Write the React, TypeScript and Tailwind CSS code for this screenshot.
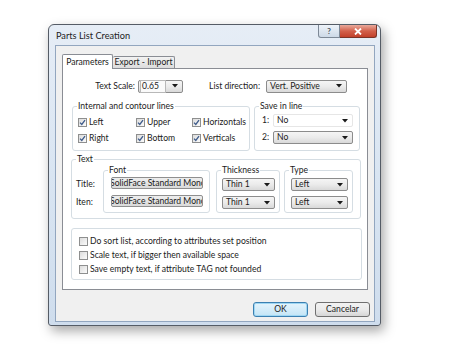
import React from "react";

const Arrow = () => (
  <svg width="6" height="4" viewBox="0 0 6 4" className="shrink-0">
    <path d="M0 0 L6 0 L3 3.5 Z" fill="#1a1a1a" />
  </svg>
);

const Combo = ({
  text,
  w,
  flat = false,
  focus = false,
}: {
  text: string;
  w: string;
  flat?: boolean;
  focus?: boolean;
}) => (
  <div
    className={`${w} h-[13px] flex items-center justify-between pl-[2px] pr-[4px] rounded-[2px] border ${
      flat
        ? "border-[#e6e6e6] bg-white"
        : "border-[#8c8c8c] bg-gradient-to-b from-[#f5f5f5] via-[#ebebeb] to-[#d9d9d9]"
    }`}
  >
    <span
      className={`leading-[11px] px-[1px] ${focus ? "bg-[#fafafa] outline outline-1 outline-[#b8b8b8] pr-[6px]" : ""}`}
    >
      {text}
    </span>
    <Arrow />
  </div>
);

const Check = ({ checked, label }: { checked: boolean; label: string }) => (
  <div className="flex items-center h-[10px]">
    <div className="w-[9px] h-[9px] border border-[#8e8f8f] bg-gradient-to-br from-[#dcdcdc] to-[#fbfbfb] flex items-center justify-center shrink-0">
      {checked && (
        <svg width="7" height="7" viewBox="0 0 7 7">
          <path d="M1 3.6 L2.8 5.5 L6 1.2" stroke="#3d5a8a" strokeWidth="1.3" fill="none" />
        </svg>
      )}
    </div>
    <span className="ml-[2px] leading-[10px] whitespace-nowrap">{label}</span>
  </div>
);

const Group = ({
  label,
  className,
  children,
}: {
  label: string;
  className: string;
  children: React.ReactNode;
}) => (
  <div className={`relative border border-[#d5dde3] rounded-[3px] ${className}`}>
    <span className="absolute -top-[6px] left-[4px] px-[1px] bg-white leading-[11px]">{label}</span>
    {children}
  </div>
);

const Field = ({ text }: { text: string }) => (
  <div className="w-[92px] h-[12px] border border-[#8f8f8f] rounded-[2px] bg-gradient-to-b from-[#eeeeee] to-[#dadada] overflow-hidden flex items-center">
    <span className="ml-[-2px] whitespace-nowrap leading-[10px]">{text}</span>
  </div>
);

export default function App() {
  return (
    <div
      className="w-[449px] h-[351px] bg-white overflow-hidden pt-[24px] pl-[48px] text-[8.6px] text-[#1b1b1b]"
      style={{ fontFamily: 'Lato, "Noto Sans", sans-serif' }}
    >
      <div className="w-[333px] h-[302px] rounded-t-[6px] rounded-b-[3px] border border-[#555c66] bg-gradient-to-b from-[#e6edf6] via-[#d9e5f2] to-[#cfdded] shadow-[3px_5px_12px_rgba(0,0,0,0.35)] flex flex-col">
        {/* title bar */}
        <div className="h-[20px] flex items-start">
          <span className="pl-[7px] pt-[5px] leading-[11px] text-[9.2px] text-[#222]">Parts List Creation</span>
          <div className="ml-auto mr-[3px] flex">
            <div className="w-[22px] h-[13px] border border-[#7d8896] border-t-0 rounded-bl-[3px] bg-gradient-to-b from-[#eef3f9] to-[#cdd9e7] flex items-center justify-center text-[8px] font-bold text-[#4b5360] leading-[10px]">
              ?
            </div>
            <div className="w-[37px] h-[13px] border border-[#7a3327] border-t-0 border-l-0 rounded-br-[3px] bg-gradient-to-b from-[#e8a99c] via-[#d2604b] to-[#c2402a] flex items-center justify-center">
              <svg width="8" height="7" viewBox="0 0 8 7">
                <path d="M1 0.5 L7 6.5 M7 0.5 L1 6.5" stroke="#ffffff" strokeWidth="1.8" />
              </svg>
            </div>
          </div>
        </div>
        {/* client area */}
        <div className="ml-[6px] mr-[5px] mb-[3px] flex-1 border border-[#92a6bf] bg-[#f0f0f0] flex flex-col pl-[6px] pt-[7px]">
          {/* tabs */}
          <div className="flex items-end h-[15px]">
            <div className="h-[15px] w-[51px] justify-center border border-b-0 border-[#8a8d94] rounded-t-[2px] bg-white flex items-center relative z-10 -mb-[1px]">
              Parameters
            </div>
            <div className="h-[12px] w-[62px] justify-center border border-b-0 border-l-0 border-[#8a8d94] rounded-t-[2px] bg-gradient-to-b from-[#f3f3f3] to-[#dcdcdc] flex items-center">
              Export - Import
            </div>
          </div>
          {/* panel */}
          <div className="w-[306px] h-[222px] border border-[#8a8d94] bg-white pl-[8px] pr-[6px] pt-[9px] flex flex-col">
            {/* row 1 */}
            <div className="flex items-center h-[16px]">
              <span className="w-[64px] text-right">Text Scale:</span>
              <div className="ml-[3px]">
                <Combo text="0.65" w="w-[45px]" focus />
              </div>
              <span className="ml-[26px] w-[57px]">List direction:</span>
              <Combo text="Vert. Positive" w="w-[81px]" />
            </div>
            {/* row 2 */}
            <div className="flex mt-[12px]">
              <Group label="Internal and contour lines" className="ml-[1px] w-[178px] h-[45px]">
                <div className="grid grid-cols-[58px_56px_1fr] gap-y-[6px] pl-[5px] pt-[10px]">
                  <Check checked label="Left" />
                  <Check checked label="Upper" />
                  <Check checked label="Horizontals" />
                  <Check checked label="Right" />
                  <Check checked label="Bottom" />
                  <Check checked label="Verticals" />
                </div>
              </Group>
              <Group label="Save in line" className="ml-[4px] w-[106px] h-[45px]">
                <div className="flex flex-col gap-[4px] pt-[7px] pl-[7px]">
                  <div className="flex items-center">
                    <span className="w-[11px]">1:</span>
                    <Combo text="No" w="w-[80px]" flat />
                  </div>
                  <div className="flex items-center">
                    <span className="w-[11px]">2:</span>
                    <Combo text="No" w="w-[80px]" />
                  </div>
                </div>
              </Group>
            </div>
            {/* Text group */}
            <Group label="Text" className="mt-[8px] w-[290px] h-[60px]">
              <div className="flex pt-[10px]">
                <div className="flex flex-col pl-[4px] pt-[8px] gap-[6px] w-[31px]">
                  <span className="leading-[12px]">Title:</span>
                  <span className="leading-[12px]">Iten:</span>
                </div>
                <Group label="Font" className="w-[107px] h-[43px]">
                  <div className="flex flex-col gap-[6px] pt-[6px] pl-[7px]">
                    <Field text="SolidFace Standard Monc" />
                    <Field text="SolidFace Standard Monc" />
                  </div>
                </Group>
                <Group label="Thickness" className="ml-[6px] w-[64px] h-[43px]">
                  <div className="flex flex-col gap-[5px] pt-[7px] pl-[5px]">
                    <Combo text="Thin 1" w="w-[53px]" />
                    <Combo text="Thin 1" w="w-[53px]" />
                  </div>
                </Group>
                <Group label="Type" className="ml-[4px] w-[69px] h-[43px]">
                  <div className="flex flex-col gap-[5px] pt-[7px] pl-[6px]">
                    <Combo text="Left" w="w-[57px]" />
                    <Combo text="Left" w="w-[57px]" />
                  </div>
                </Group>
              </div>
            </Group>
            {/* options group */}
            <div className="mt-[9px] w-[291px] h-[52px] border border-[#d5dde3] rounded-[3px] flex flex-col gap-[4px] pl-[7px] pt-[7px]">
              <Check checked={false} label="Do sort list, according to attributes set position" />
              <Check checked={false} label="Scale text, if bigger then available space" />
              <Check checked={false} label="Save empty text, if attribute TAG not founded" />
            </div>
          </div>
          {/* buttons */}
          <div className="flex justify-end gap-[7px] mt-[12px] pr-[4px]">
            <div className="w-[55px] h-[15px] rounded-[3px] border border-[#3c80b1] bg-gradient-to-b from-[#e5f4fc] to-[#c4e5f6] shadow-[inset_0_0_0_1px_#9fd7f3] flex items-center justify-center">
              OK
            </div>
            <div className="w-[55px] h-[15px] rounded-[3px] border border-[#707070] bg-gradient-to-b from-[#f2f2f2] via-[#ebebeb] to-[#d6d6d6] flex items-center justify-center">
              Cancelar
            </div>
          </div>
        </div>
      </div>
    </div>
  );
}
